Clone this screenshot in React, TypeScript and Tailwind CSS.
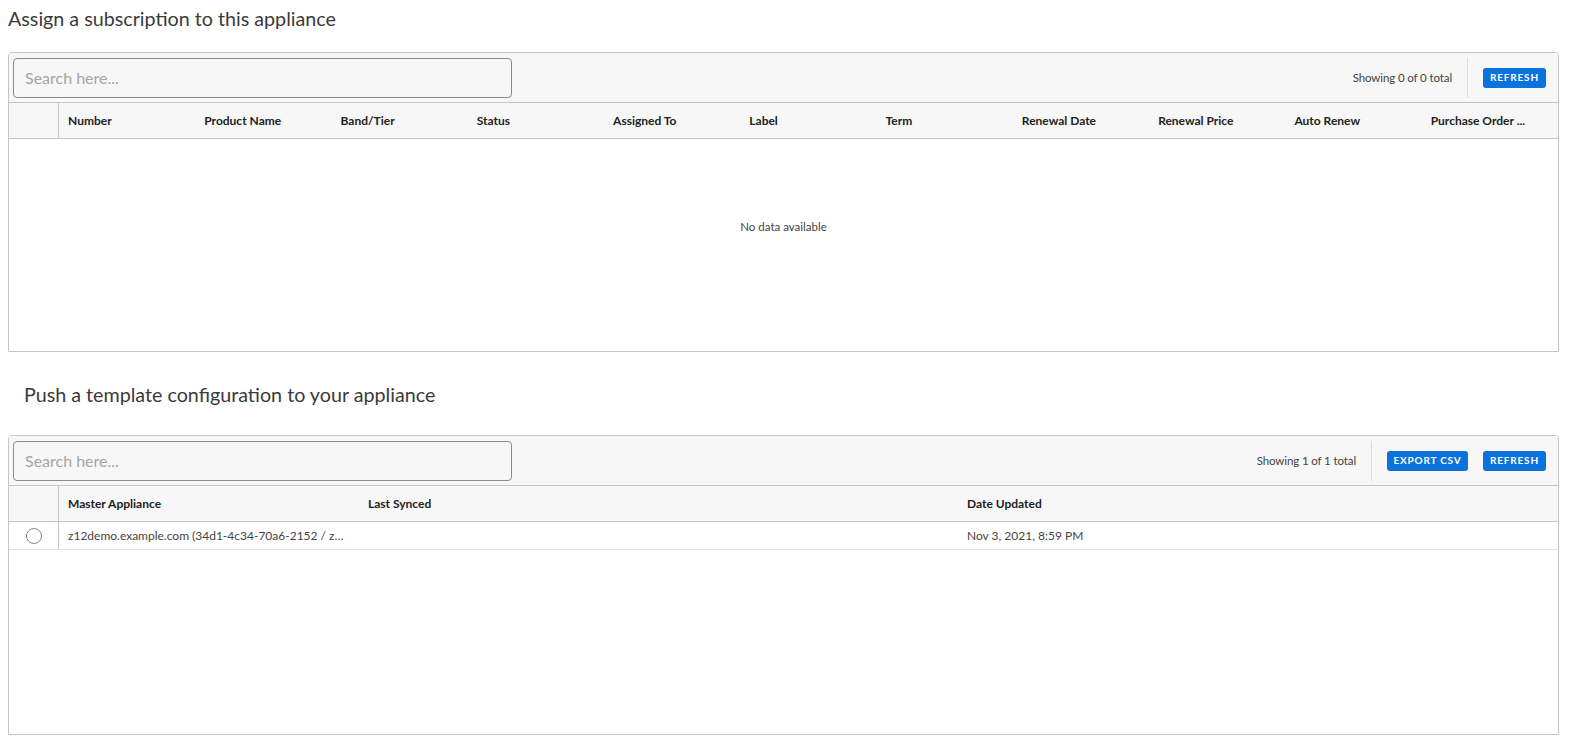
import React from "react";

const font = { fontFamily: "Lato, 'Open Sans', sans-serif" };

function Toolbar({ summary, exportCsv }: { summary: string; exportCsv?: boolean }) {
  return (
    <div className="flex h-[49px] items-center bg-[#f7f7f7] pl-[4px] pr-[12px]">
      <div className="flex h-[40px] w-[499px] items-center rounded-[4px] border border-[#8a8a8a] bg-[#f7f7f7] pl-[11px]">
        <span className="text-[16px] text-[#a5a5a5]">Search here...</span>
      </div>
      <div className="flex-1" />
      <span className="text-[11.5px] tracking-[-0.01em] text-[#444]">{summary}</span>
      <div className="mx-[15px] h-[40px] w-px bg-[#dcdcdc]" />
      {exportCsv && (
        <button className="mr-[15px] flex h-[20px] w-[81px] items-center justify-center rounded-[3px] bg-[#0a72dc] text-[10px] font-bold tracking-[0.08em] text-white">
          EXPORT CSV
        </button>
      )}
      <button className="flex h-[20px] w-[63px] items-center justify-center rounded-[3px] bg-[#0a72dc] text-[10px] font-bold tracking-[0.08em] text-white">
        REFRESH
      </button>
    </div>
  );
}

const subCols = [
  "Number",
  "Product Name",
  "Band/Tier",
  "Status",
  "Assigned To",
  "Label",
  "Term",
  "Renewal Date",
  "Renewal Price",
  "Auto Renew",
  "Purchase Order ...",
];

export default function App() {
  return (
    <div className="min-h-[748px] bg-white text-[#333]" style={font}>
      <h2 className="pl-[8px] pt-[7px] text-[19.7px] leading-[24px] text-[#3a3a3a]">
        Assign a subscription to this appliance
      </h2>
      <div className="ml-[8px] mr-[11px] mt-[21px] flex h-[300px] flex-col overflow-hidden rounded-t-[4px] border border-[#c4c4cc]">
        <Toolbar summary="Showing 0 of 0 total" />
        <div className="flex h-[37px] border-y border-[#c4c4cc] bg-[#f7f7f7]">
          <div className="w-[50px] shrink-0 border-r border-[#c4c4cc]" />
          {subCols.map((c) => (
            <div key={c} className="flex flex-1 items-center pl-[9px] text-[12px] font-bold text-[#222]">
              {c}
            </div>
          ))}
        </div>
        <div className="flex flex-1 justify-center pt-[80px] text-[11.5px] leading-[16px] text-[#444]">
          No data available
        </div>
      </div>

      <h2 className="pl-[24px] pt-[31px] text-[19.7px] leading-[24px] text-[#3a3a3a]">
        Push a template configuration to your appliance
      </h2>
      <div className="ml-[8px] mr-[11px] mt-[28px] flex h-[300px] flex-col overflow-hidden rounded-t-[4px] border border-[#c4c4cc]">
        <Toolbar summary="Showing 1 of 1 total" exportCsv />
        <div className="flex h-[37px] border-y border-[#c4c4cc] bg-[#f7f7f7]">
          <div className="w-[50px] shrink-0 border-r border-[#c4c4cc]" />
          <div className="flex w-[300px] items-center pl-[9px] text-[12px] font-bold text-[#222]">Master Appliance</div>
          <div className="flex w-[599px] items-center pl-[9px] text-[12px] font-bold text-[#222]">Last Synced</div>
          <div className="flex flex-1 items-center pl-[9px] text-[12px] font-bold text-[#222]">Date Updated</div>
        </div>
        <div className="flex h-[28px] border-b border-[#e2e2e8]">
          <div className="flex w-[50px] shrink-0 items-center justify-center border-r border-[#c4c4cc]">
            <span className="block h-[16px] w-[16px] rounded-full border-[1.5px] border-[#888]" />
          </div>
          <div className="flex w-[300px] items-center pl-[9px] text-[12px] text-[#444]">
            <span className="truncate">z12demo.example.com (34d1-4c34-70a6-2152 / z…</span>
          </div>
          <div className="w-[599px]" />
          <div className="flex flex-1 items-center pl-[9px] text-[12px] text-[#444]">Nov 3, 2021, 8:59 PM</div>
        </div>
        <div className="flex-1" />
      </div>
    </div>
  );
}
